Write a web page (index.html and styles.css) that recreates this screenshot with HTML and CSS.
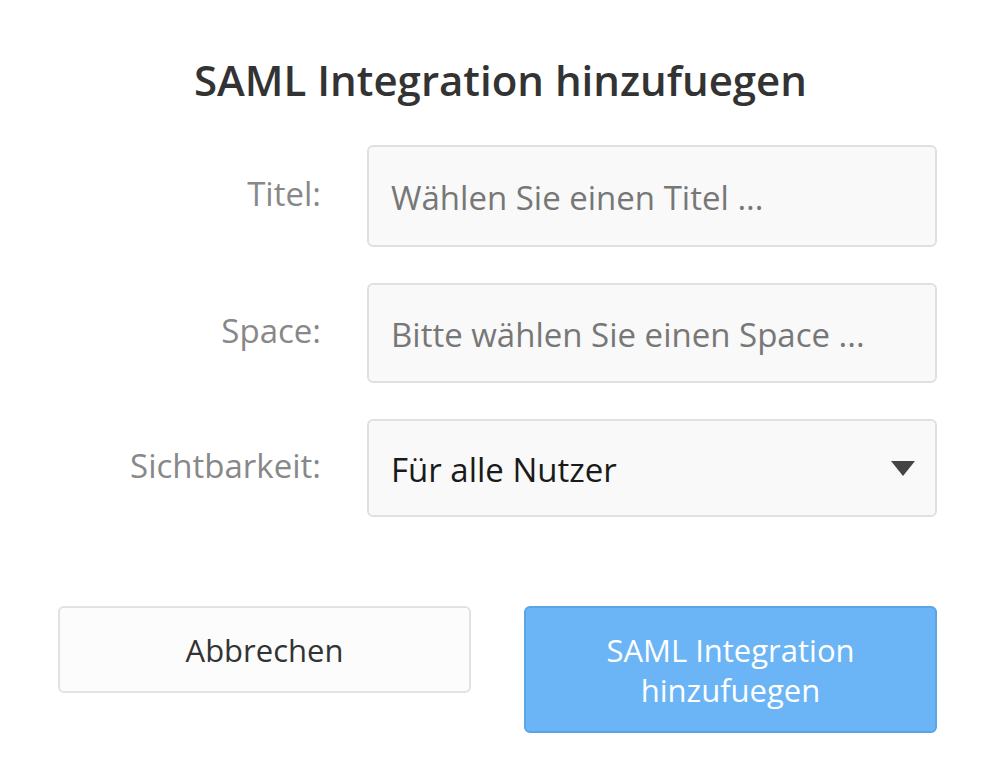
FILE: index.html
```html
<!DOCTYPE html>
<html lang="de">
<head>
<meta charset="utf-8">
<title>SAML Integration hinzufuegen</title>
<link rel="stylesheet" href="styles.css">
</head>
<body>
<div class="dialog">
  <h1 class="title">SAML Integration hinzufuegen</h1>
  <div class="form">
    <label class="label">Titel:</label>
    <div class="field f1"><span class="placeholder">Wählen Sie einen Titel ...</span></div>
    <label class="label">Space:</label>
    <div class="field f2"><span class="placeholder">Bitte wählen Sie einen Space ...</span></div>
    <label class="label">Sichtbarkeit:</label>
    <div class="field f3 select"><span class="value">Für alle Nutzer</span><span class="arrow"></span></div>
  </div>
  <div class="actions">
    <button class="btn btn-cancel">Abbrechen</button>
    <button class="btn btn-primary">SAML Integration hinzufuegen</button>
  </div>
</div>
</body>
</html>
```
FILE: styles.css
```css
html, body {
  margin: 0;
  padding: 0;
  background: #ffffff;
}
body {
  font-family: "Open Sans", "Noto Sans", sans-serif;
}
.dialog {
  padding: 55px 51px 0 58px;
}
.title {
  margin: 0;
  text-align: center;
  font-size: 42px;
  font-weight: 600;
  line-height: 50px;
  color: #333333;
  padding-left: 6px;
}
.form {
  margin-top: 40px;
  display: grid;
  grid-template-columns: 263px 570px;
  column-gap: 46px;
  row-gap: 36px;
  align-items: center;
}
.label {
  text-align: right;
  font-size: 33px;
  line-height: 44px;
  color: #888888;
  padding-bottom: 4px;
}
.field {
  box-sizing: border-box;
  border: 2px solid #e0e0e0;
  border-radius: 6px;
  background: #f9f9f9;
  display: flex;
  align-items: center;
  padding: 3px 22px 0;
  font-size: 33px;
  line-height: 44px;
}
.f1 { height: 102px; }
.f2 { height: 100px; }
.f3 { height: 98px; }
.placeholder {
  color: #777777;
}
.select {
  justify-content: space-between;
}
.value {
  color: #1a1a1a;
}
.arrow {
  width: 0;
  height: 0;
  border-left: 12px solid transparent;
  border-right: 12px solid transparent;
  border-top: 15px solid #444444;
  margin-right: -2px;
  margin-top: -3px;
}
.actions {
  margin-top: 89px;
  display: flex;
  gap: 53px;
  align-items: flex-start;
}
.btn {
  box-sizing: border-box;
  width: 413px;
  font-family: "Open Sans", "Noto Sans", sans-serif;
  font-size: 31px;
  line-height: 40px;
  border-radius: 6px;
  padding: 0 60px;
}
.btn-cancel {
  height: 87px;
  background: #fcfcfc;
  border: 2px solid #e2e2e2;
  color: #333333;
}
.btn-primary {
  height: 127px;
  background: #6bb5f7;
  border: 2px solid #5aa5e6;
  color: #ffffff;
}
```
